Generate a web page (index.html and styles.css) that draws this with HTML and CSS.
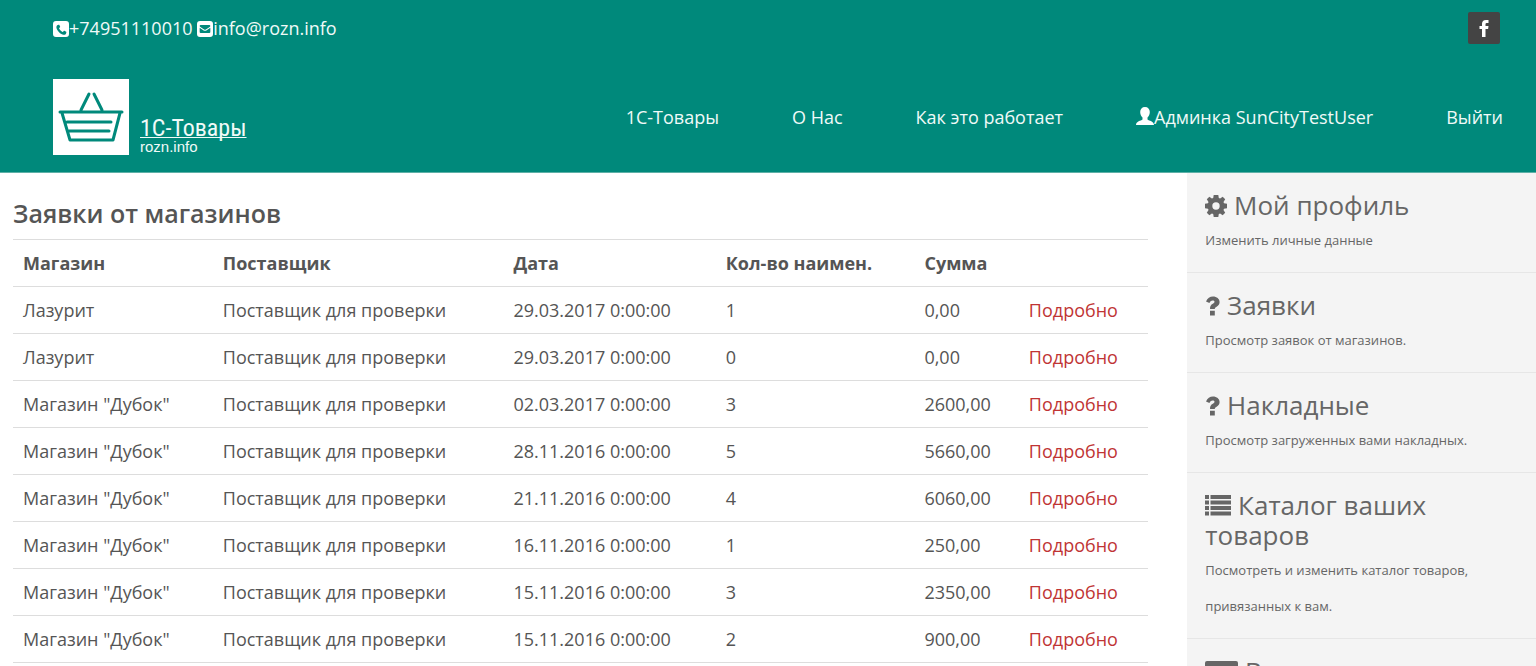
FILE: index.html
```
<!DOCTYPE html>
<html lang="ru">
<head>
<meta charset="utf-8">
<title>1С-Товары</title>
<link rel="stylesheet" href="styles.css">
</head>
<body>
<header class="header">
  <div class="topbar">
    <div class="contacts">
      <a href="tel:+74951110010"><svg class="icon-contact" viewBox="0 0 1536 1536" aria-hidden="true"><path fill-rule="evenodd" d="M288 0H1248Q1536 0 1536 288V1248Q1536 1536 1248 1536H288Q0 1536 0 1248V288Q0 0 288 0ZM1280 1056c0-14-2-22-14-28l-170-93c-21-11-38-5-50 10l-72 92c-14 18-34 20-56 9-140-66-262-188-330-330-10-22-8-38 10-52l72-56c20-16 26-34 16-56l-76-180c-8-19-18-24-40-24-66 0-162 26-206 106-34 62-44 130-32 202 62 294 346 592 640 662 92 20 180 4 242-50 44-40 66-130 66-212Z"/></svg>+74951110010</a>
      <a href="mailto:info@rozn.info"><svg class="icon-contact" viewBox="0 0 1536 1536" aria-hidden="true"><path fill-rule="evenodd" d="M288 0H1248Q1536 0 1536 288V1248Q1536 1536 1248 1536H288Q0 1536 0 1248V288Q0 0 288 0ZM256 640V1056Q256 1152 352 1152H1184Q1280 1152 1280 1056V640L900 900Q768 990 636 900ZM352 384Q256 384 256 470 256 520 320 566L680 810Q768 868 856 810L1216 566Q1280 520 1280 470 1280 384 1184 384Z"/></svg>info@rozn.info</a>
    </div>
    <a class="facebook" href="#" aria-label="Facebook"><svg viewBox="0 0 10 18" aria-hidden="true"><path d="M9.500 1v3H7.600Q6.500 4 6.500 5.200V7h3l-.4 3H6.500v8H3v-8H.5V7H3V4.800Q3 1 7 1Z"/></svg></a>
  </div>
  <div class="navbar">
    <a class="logo" href="#">
      <svg class="basket" viewBox="0 0 76 76" aria-hidden="true"><rect width="76" height="76" fill="#fff"/><g fill="none" stroke="#00897b" stroke-width="3" stroke-linecap="round" stroke-linejoin="round"><path d="M7 33H69M9 34 17 61H60L67 34M28 31 36 15M49 31 41 15M14 43H58M16 52H56"/></g></svg>
      <span class="logo-text"><span class="logo-name">1С-Товары</span><span class="logo-site">rozn.info</span></span>
    </a>
    <nav class="menu">
      <a href="#">1С-Товары</a>
      <a href="#">О Нас</a>
      <a href="#">Как это работает</a>
      <a href="#"><svg class="icon-user" viewBox="0 0 18 18" aria-hidden="true"><path d="M9 0C6 0 4.200 2 4.200 5c0 2.500 1 4.300 2.300 5.500v2C5 14 0 14 0 18H18c0-4-5-4-6.500-5.500v-2C12.800 9.300 13.800 7.500 13.800 5 13.800 2 12 0 9 0Z"/></svg>Админка SunCityTestUser</a>
      <a href="#">Выйти</a>
    </nav>
  </div>
</header>
<div class="page">
  <main class="content">
    <h1>Заявки от магазинов</h1>
    <table class="orders">
      <colgroup><col class="c-shop"><col class="c-supplier"><col class="c-date"><col class="c-count"><col class="c-sum"><col class="c-more"></colgroup>
      <thead>
        <tr><th>Магазин</th><th>Поставщик</th><th>Дата</th><th>Кол-во наимен.</th><th>Сумма</th><th></th></tr>
      </thead>
      <tbody>
        <tr><td>Лазурит</td><td>Поставщик для проверки</td><td>29.03.2017 0:00:00</td><td>1</td><td>0,00</td><td><a href="#">Подробно</a></td></tr>
        <tr><td>Лазурит</td><td>Поставщик для проверки</td><td>29.03.2017 0:00:00</td><td>0</td><td>0,00</td><td><a href="#">Подробно</a></td></tr>
        <tr><td>Магазин "Дубок"</td><td>Поставщик для проверки</td><td>02.03.2017 0:00:00</td><td>3</td><td>2600,00</td><td><a href="#">Подробно</a></td></tr>
        <tr><td>Магазин "Дубок"</td><td>Поставщик для проверки</td><td>28.11.2016 0:00:00</td><td>5</td><td>5660,00</td><td><a href="#">Подробно</a></td></tr>
        <tr><td>Магазин "Дубок"</td><td>Поставщик для проверки</td><td>21.11.2016 0:00:00</td><td>4</td><td>6060,00</td><td><a href="#">Подробно</a></td></tr>
        <tr><td>Магазин "Дубок"</td><td>Поставщик для проверки</td><td>16.11.2016 0:00:00</td><td>1</td><td>250,00</td><td><a href="#">Подробно</a></td></tr>
        <tr><td>Магазин "Дубок"</td><td>Поставщик для проверки</td><td>15.11.2016 0:00:00</td><td>3</td><td>2350,00</td><td><a href="#">Подробно</a></td></tr>
        <tr><td>Магазин "Дубок"</td><td>Поставщик для проверки</td><td>15.11.2016 0:00:00</td><td>2</td><td>900,00</td><td><a href="#">Подробно</a></td></tr>
      </tbody>
    </table>
  </main>
  <aside class="sidebar">
    <a class="side-item" href="#">
      <h2><svg class="i-gear" viewBox="0 0 22 22" aria-hidden="true"><path fill-rule="evenodd" d="M8.700 0h4.600l.5 3 1.300.5L17.700 1.800 20.200 4.300l-1.700 2.600.5 1.300 3 .5v4.600l-3 .5-.5 1.300 1.700 2.600-2.500 2.500-2.600-1.700-1.300.5-.5 3H8.700l-.5-3-1.300-.5-2.600 1.700-2.500-2.500 1.700-2.600L3 13.800l-3-.5V8.700l3-.5.5-1.300L1.800 4.300 4.300 1.800l2.600 1.700L8.200 3ZM11 7.300a3.700 3.700 0 1 0 0 7.400a3.700 3.700 0 1 0 0-7.400Z"/></svg> Мой профиль</h2>
      <p>Изменить личные данные</p>
    </a>
    <a class="side-item" href="#">
      <h2><svg class="i-question" viewBox="0 0 15 20" aria-hidden="true"><path d="M5 14.800h4.800v4.700H5ZM1 5.600C2.500 2.200 4.800.5 8 .5c3.800 0 6.600 2.300 6.600 5.600 0 2.200-1.100 3.500-3 4.600-1.200.7-1.800 1.200-1.800 2.300H5c0-3 .9-4.200 2.800-5.300 1.200-.7 1.700-1.100 1.700-1.900 0-.9-.8-1.400-1.900-1.400-1.300 0-2.100.7-3.200 2.500Z"/></svg> Заявки</h2>
      <p>Просмотр заявок от магазинов.</p>
    </a>
    <a class="side-item" href="#">
      <h2><svg class="i-question" viewBox="0 0 15 20" aria-hidden="true"><path d="M5 14.800h4.800v4.700H5ZM1 5.600C2.500 2.200 4.800.5 8 .5c3.800 0 6.600 2.300 6.600 5.600 0 2.200-1.100 3.500-3 4.600-1.200.7-1.800 1.200-1.800 2.300H5c0-3 .9-4.200 2.800-5.300 1.200-.7 1.700-1.100 1.700-1.900 0-.9-.8-1.400-1.900-1.400-1.300 0-2.100.7-3.200 2.500Z"/></svg> Накладные</h2>
      <p>Просмотр загруженных вами накладных.</p>
    </a>
    <a class="side-item" href="#">
      <h2><svg class="i-list" viewBox="0 0 26 22" aria-hidden="true"><path d="M0 1h4v4H0ZM5.500 1H26v4H5.500ZM0 6.500h4v4H0ZM5.500 6.500H26v4H5.500ZM0 12h4v4H0ZM5.500 12H26v4H5.500ZM0 17.500h4v4H0ZM5.500 17.500H26v4H5.500Z"/></svg> Каталог ваших товаров</h2>
      <p>Посмотреть и изменить каталог товаров, привязанных к вам.</p>
    </a>
    <a class="side-item" href="#">
      <h2><svg class="i-card" viewBox="0 0 33 22" aria-hidden="true"><rect width="33" height="22" rx="2"/></svg> В</h2>
    </a>
  </aside>
</div>
</body>
</html>
```
FILE: styles.css
```
* { box-sizing: border-box; }

html { overflow: hidden; }

body {
  margin: 0;
  font: 18px/26px "Open Sans", "Noto Sans", sans-serif;
  color: #555;
  background: #fff;
}

a { text-decoration: none; color: inherit; }

svg { fill: currentColor; }

.header {
  background: #00897b;
  color: #f0faf8;
  border-bottom: 1px solid #5eb0a7;
}

.topbar {
  display: flex;
  justify-content: space-between;
  align-items: center;
  padding: 12px 36px 0 53px;
}

.icon-contact {
  width: 16px;
  height: 16px;
  color: #fff;
  vertical-align: -2px;
}

.facebook {
  display: flex;
  align-items: center;
  justify-content: center;
  width: 32px;
  height: 32px;
  border-radius: 2px;
  background: #444;
  color: #fff;
}

.facebook svg { width: 10px; height: 18px; }

.navbar {
  display: flex;
  justify-content: space-between;
  align-items: center;
  padding: 35px 33px 17px 53px;
}

.logo {
  display: flex;
  align-items: flex-end;
  gap: 11px;
}

.basket { width: 76px; height: 76px; }

.logo-text { display: flex; flex-direction: column; }

.logo-name {
  font: 24px/22px "Roboto Condensed", Roboto, sans-serif;
  text-decoration: underline 1px;
  text-decoration-skip-ink: none;
  text-underline-offset: 1px;
}

.logo-site { font: 15px/16px "Liberation Sans", Arial, sans-serif; }

.menu { display: flex; gap: 73px; }

.icon-user {
  width: 18px;
  height: 18px;
  color: #fff;
  vertical-align: -1px;
}

.page { display: flex; align-items: stretch; }

.content { flex: 1; padding: 23px 39px 0 13px; }

h1 {
  margin: 0 0 9px;
  font-size: 25px;
  font-weight: 600;
  line-height: 34px;
}

.orders {
  width: 100%;
  table-layout: fixed;
  border-collapse: collapse;
  border-bottom: 1px solid #ddd;
}

.c-shop { width: 17.6%; }
.c-supplier { width: 25.6%; }
.c-date { width: 18.7%; }
.c-count { width: 17.5%; }
.c-sum { width: 9.2%; }

.orders th,
.orders td {
  padding: 10px;
  text-align: left;
  white-space: nowrap;
  border-top: 1px solid #ddd;
}

.orders th { font-weight: 700; }
.orders td a { color: #c03434; }

.sidebar {
  width: 22.7%;
  background: #f4f4f4;
  color: #666;
}

.side-item {
  display: block;
  padding: 17px 60px 14px 18px;
  border-bottom: 1px solid #e6e6e6;
}

.side-item h2 {
  margin: 0 0 2px;
  font-size: 26px;
  font-weight: 400;
  line-height: 30px;
}

.side-item p {
  margin: 0;
  font-size: 13px;
  line-height: 36px;
}

.i-gear { width: 22px; height: 22px; vertical-align: -2px; }
.i-question { width: 15px; height: 20px; vertical-align: -1px; }
.i-list { width: 26px; height: 22px; vertical-align: -1px; }
.i-card { width: 33px; height: 22px; vertical-align: -2px; }
```
